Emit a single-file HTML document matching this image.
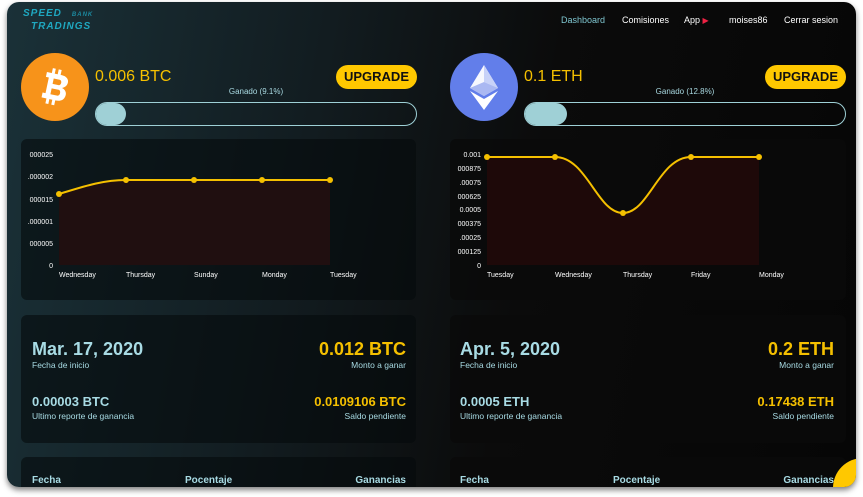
<!DOCTYPE html>
<html><head><meta charset="utf-8"><style>
*{margin:0;padding:0;box-sizing:border-box}
body{width:863px;height:497px;background:#fff;overflow:hidden;font-family:"Liberation Sans",sans-serif;position:relative}
#app{position:absolute;left:7px;top:2px;width:849px;height:485px;border-radius:12px;overflow:hidden;
background:linear-gradient(100deg,#1a3138 0%,#121c20 35%,#0b0b0b 60%,#060606 100%);box-shadow:0 3px 6px rgba(0,0,0,.5)}
.a{position:absolute}
.nav{top:13px;font-size:9px;color:#fff}
.card{position:absolute;background:rgba(5,10,12,.6);border-radius:6px}
.amt{font-size:16px;color:#f5c000}
.up{background:#ffc800;border-radius:12px;color:#111;font-weight:bold;font-size:13px;text-align:center;line-height:24px;height:24px}
.gan{font-size:8px;color:#a8d8e0;text-align:center}
.bar{height:24px;border:1.5px solid #9ed0d6;border-radius:12px}
.fill{position:absolute;left:0;top:0;bottom:0;background:#9fd0d6;border-radius:11px}
.big{font-size:18px;color:#a8dbe4;font-weight:bold}
.bigy{font-size:18px;color:#f5c000;font-weight:bold;text-align:right}
.med{font-size:13px;color:#a8dbe4;font-weight:bold}
.medy{font-size:13px;color:#f5c000;font-weight:bold;text-align:right}
.sm{font-size:8.5px;color:#a8dbe4}
.hd{font-size:10px;color:#a8dbe4;font-weight:bold}
</style></head><body>
<div id="app">
<div class="a" style="left:16px;top:6px;font-style:italic;font-weight:bold;color:#1fa8c0;font-size:10px;line-height:11px;letter-spacing:1px">SPEED<span style="font-size:6px;color:#1c8aa0;margin-left:10px">BANK</span><br><span style="margin-left:8px">TRADINGS</span></div>
<div class="a nav" style="left:554px;color:#7fc6d0">Dashboard</div>
<div class="a nav" style="left:615px">Comisiones</div>
<div class="a nav" style="left:677px">App <span style="color:#e24;font-size:8px">▶</span></div>
<div class="a nav" style="left:722px">moises86</div>
<div class="a nav" style="left:777px">Cerrar sesion</div>

<!-- BTC -->
<div class="a" style="left:14px;top:51px;width:68px;height:68px;border-radius:50%;background:#f7931a">
<svg width="68" height="68" viewBox="0 0 68 68"><g transform="rotate(12 34 34)" fill="#fff"><rect x="28" y="16" width="3" height="6"/><rect x="34" y="16" width="3" height="6"/><rect x="28" y="46" width="3" height="6"/><rect x="34" y="46" width="3" height="6"/><path d="M23,21 H38 C45,21 47,26 45,30 C44,32 42,33 41,33.5 C44,34 47,37 46,41 C45,46 41,47 37,47 H23 V42 H26 V26 H23Z M31,26 V31.5 H37 C40,31.5 40,26 37,26Z M31,36 V42 H38 C41,42 41,36 38,36Z"/></g></svg></div>
<div class="a amt" style="left:88px;top:66px">0.006 BTC</div>
<div class="a up" style="left:329px;top:63px;width:81px">UPGRADE</div>
<div class="a gan" style="left:88px;top:85px;width:322px">Ganado (9.1%)</div>
<div class="a bar" style="left:88px;top:100px;width:322px"><div class="fill" style="width:30px"></div></div>

<!-- ETH -->
<div class="a" style="left:443px;top:51px;width:68px;height:68px;border-radius:50%;background:#627eea">
<svg width="68" height="68" viewBox="0 0 68 68"><polygon points="34,12 48,35 34,43 20,35" fill="#fff" opacity=".95"/><polygon points="34,12 48,35 34,29" fill="#c8d2f8"/><polygon points="34,29 48,35 34,43 20,35" fill="#aab8f2"/><polygon points="20,38 34,46 48,38 34,57" fill="#fff"/></svg></div>
<div class="a amt" style="left:517px;top:66px">0.1 ETH</div>
<div class="a up" style="left:758px;top:63px;width:81px">UPGRADE</div>
<div class="a gan" style="left:517px;top:85px;width:322px">Ganado (12.8%)</div>
<div class="a bar" style="left:517px;top:100px;width:322px"><div class="fill" style="width:42px"></div></div>

<!-- charts -->
<div class="card" style="left:14px;top:137px;width:395px;height:161px"></div>
<div class="card" style="left:443px;top:137px;width:396px;height:161px;background:rgba(10,10,10,.8)"></div>
<svg class="a" style="left:0;top:0" width="849" height="485" font-family="Liberation Sans" font-size="7" fill="#fff">
<g text-anchor="end">
<text x="46" y="155">000025</text><text x="46" y="177">.000002</text><text x="46" y="200">000015</text><text x="46" y="222">.000001</text><text x="46" y="244">000005</text><text x="46" y="266">0</text>
</g>
<path d="M52,192 C75,185 95,178 119,178 L323,178 L323,263 L52,263Z" fill="#200f10"/>
<path d="M52,192 C75,185 95,178 119,178 L323,178" stroke="#f5c000" stroke-width="2" fill="none"/>
<g fill="#f5c000"><circle cx="52" cy="192" r="3"/><circle cx="119" cy="178" r="3"/><circle cx="187" cy="178" r="3"/><circle cx="255" cy="178" r="3"/><circle cx="323" cy="178" r="3"/></g>
<text x="52" y="275">Wednesday</text><text x="119" y="275">Thursday</text><text x="187" y="275">Sunday</text><text x="255" y="275">Monday</text><text x="323" y="275">Tuesday</text>
<g text-anchor="end">
<text x="474" y="155">0.001</text><text x="474" y="169">000875</text><text x="474" y="183">.00075</text><text x="474" y="197">000625</text><text x="474" y="210">0.0005</text><text x="474" y="224">000375</text><text x="474" y="238">.00025</text><text x="474" y="252">000125</text><text x="474" y="266">0</text>
</g>
<path d="M480,155 L548,155 C580,155 590,211 616,211 C642,211 652,155 684,155 L752,155 L752,263 L480,263Z" fill="#1e0909"/>
<path d="M480,155 L548,155 C580,155 590,211 616,211 C642,211 652,155 684,155 L752,155" stroke="#f5c000" stroke-width="2" fill="none"/>
<g fill="#f5c000"><circle cx="480" cy="155" r="3"/><circle cx="548" cy="155" r="3"/><circle cx="616" cy="211" r="3"/><circle cx="684" cy="155" r="3"/><circle cx="752" cy="155" r="3"/></g>
<text x="480" y="275">Tuesday</text><text x="548" y="275">Wednesday</text><text x="616" y="275">Thursday</text><text x="684" y="275">Friday</text><text x="752" y="275">Monday</text>
</svg>

<!-- info cards -->
<div class="card" style="left:14px;top:313px;width:395px;height:128px"></div>
<div class="a big" style="left:25px;top:337px">Mar. 17, 2020</div>
<div class="a sm" style="left:25px;top:358px">Fecha de inicio</div>
<div class="a bigy" style="left:200px;top:337px;width:199px">0.012 BTC</div>
<div class="a sm" style="left:200px;top:358px;width:199px;text-align:right">Monto a ganar</div>
<div class="a med" style="left:25px;top:392px">0.00003 BTC</div>
<div class="a sm" style="left:25px;top:409px">Ultimo reporte de ganancia</div>
<div class="a medy" style="left:200px;top:392px;width:199px">0.0109106 BTC</div>
<div class="a sm" style="left:200px;top:409px;width:199px;text-align:right">Saldo pendiente</div>

<div class="card" style="left:443px;top:313px;width:396px;height:128px;background:rgba(10,10,10,.8)"></div>
<div class="a big" style="left:453px;top:337px">Apr. 5, 2020</div>
<div class="a sm" style="left:453px;top:358px">Fecha de inicio</div>
<div class="a bigy" style="left:628px;top:337px;width:199px">0.2 ETH</div>
<div class="a sm" style="left:628px;top:358px;width:199px;text-align:right">Monto a ganar</div>
<div class="a med" style="left:453px;top:392px">0.0005 ETH</div>
<div class="a sm" style="left:453px;top:409px">Ultimo reporte de ganancia</div>
<div class="a medy" style="left:628px;top:392px;width:199px">0.17438 ETH</div>
<div class="a sm" style="left:628px;top:409px;width:199px;text-align:right">Saldo pendiente</div>

<div class="card" style="left:14px;top:455px;width:395px;height:60px"></div>
<div class="card" style="left:443px;top:455px;width:396px;height:60px;background:rgba(10,10,10,.8)"></div>
<div class="a hd" style="left:25px;top:473px">Fecha</div>
<div class="a hd" style="left:178px;top:473px">Pocentaje</div>
<div class="a hd" style="left:300px;top:473px;width:99px;text-align:right">Ganancias</div>
<div class="a hd" style="left:453px;top:473px">Fecha</div>
<div class="a hd" style="left:606px;top:473px">Pocentaje</div>
<div class="a hd" style="left:728px;top:473px;width:99px;text-align:right">Ganancias</div>
<div class="a" style="left:826px;top:456px;width:60px;height:60px;border-radius:50%;background:#ffc800"></div>
</div>
</body></html>
